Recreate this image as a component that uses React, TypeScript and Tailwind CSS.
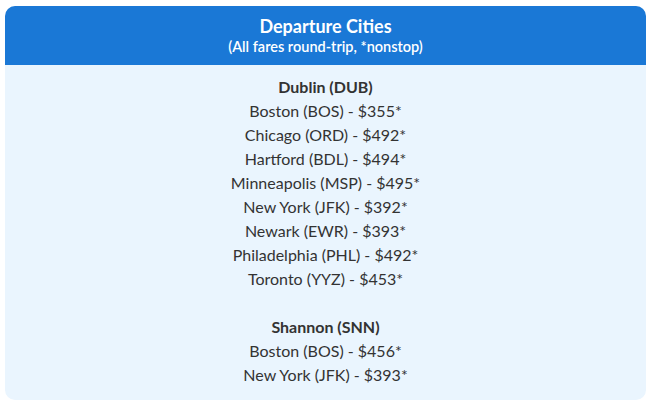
const dublin = [
  'Boston (BOS) - $355*',
  'Chicago (ORD) - $492*',
  'Hartford (BDL) - $494*',
  'Minneapolis (MSP) - $495*',
  'New York (JFK) - $392*',
  'Newark (EWR) - $393*',
  'Philadelphia (PHL) - $492*',
  'Toronto (YYZ) - $453*',
];

const shannon = ['Boston (BOS) - $456*', 'New York (JFK) - $393*'];

export default function App() {
  return (
    <div className="bg-white min-h-screen pt-[6px] px-[5px] font-['Lato','Open_Sans',sans-serif]">
      <div className="w-[641px] rounded-[10px] overflow-hidden bg-[#eaf5fe]">
        {/* Header */}
        <div className="bg-[#1a78d6] text-white text-center pt-[8px] pb-[9px]">
          <h2 className="text-[18px] leading-[24px] font-bold">Departure Cities</h2>
          <p className="text-[14.5px] leading-[18px] font-semibold">(All fares round-trip, *nonstop)</p>
        </div>

        {/* Body */}
        <div className="text-center text-[#333333] text-[16px] leading-[24px] pt-[10px] pb-[13px]">
          <p className="font-bold">Dublin (DUB)</p>
          {dublin.map((row) => (
            <p key={row}>{row}</p>
          ))}
          <p className="h-[24px]" />
          <p className="font-bold">Shannon (SNN)</p>
          {shannon.map((row) => (
            <p key={row}>{row}</p>
          ))}
        </div>
      </div>
    </div>
  );
}
